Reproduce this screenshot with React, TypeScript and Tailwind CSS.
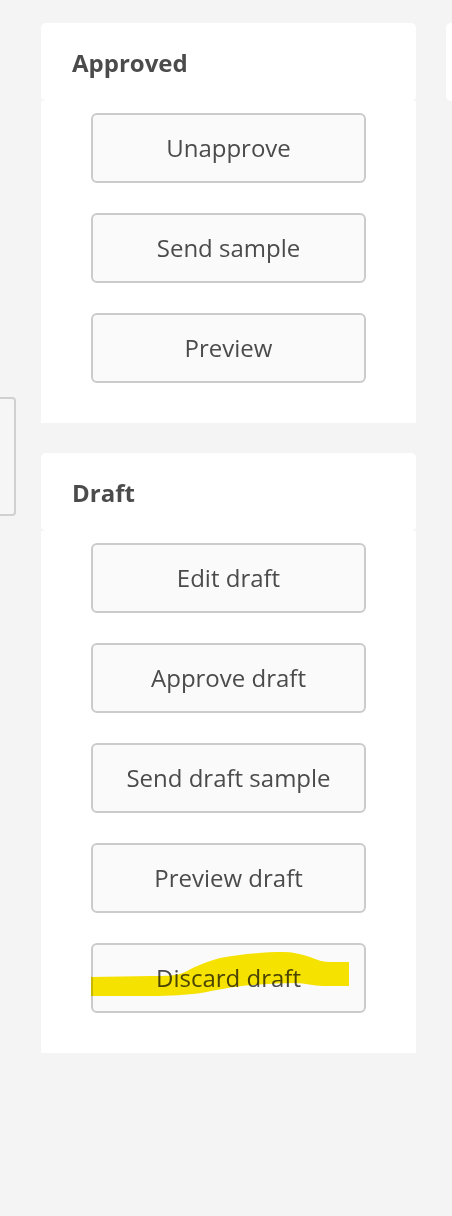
import React from "react";

type Section = {
  title: string;
  actions: string[];
};

const sections: Section[] = [
  { title: "Approved", actions: ["Unapprove", "Send sample", "Preview"] },
  {
    title: "Draft",
    actions: [
      "Edit draft",
      "Approve draft",
      "Send draft sample",
      "Preview draft",
      "Discard draft",
    ],
  },
];

const font = { fontFamily: '"Open Sans", "Noto Sans", sans-serif' };

// yellow marker stroke someone drew over the discard button
const Highlight: React.FC = () => (
  <svg
    className="pointer-events-none absolute left-0 top-0 mix-blend-multiply"
    width="275"
    height="70"
    viewBox="0 0 275 70"
  >
    <path
      d="M0 34 L60 33 C75 33 84 33 92 30 C100 26 110 20 129 15 C150 11 175 9 192 9 C202 9 210 11 219 14 C226 17 232 19 240 19 L258 19 L258 43 L232 43 C222 43 214 40 205 40 C190 40 175 41 160 42 C140 44 125 47 110 50 C95 52 80 53 60 53 L0 53 Z"
      fill="#fbe700"
    />
  </svg>
);

const ActionButton: React.FC<{ label: string; marked?: boolean }> = ({
  label,
  marked,
}) => (
  <div className="relative h-[70px] w-[275px]">
    <button
      className="flex h-full w-full items-center justify-center rounded-[6px] border-2 border-[#cbcbcb] bg-[#fafafa] text-[24px] text-[#4b4b4b]"
      style={font}
    >
      {label}
    </button>
    {marked && <Highlight />}
  </div>
);

const Card: React.FC<{ section: Section }> = ({ section }) => (
  <div className="flex flex-col">
    <div className="flex h-[78px] items-center rounded-[5px] bg-white pl-[31px] pt-[2px]">
      <h2 className="text-[24px] font-bold text-[#4b4b4b]" style={font}>
        {section.title}
      </h2>
    </div>
    <div className="flex flex-col gap-[30px] bg-white pb-[40px] pl-[50px] pt-[12px]">
      {section.actions.map((a) => (
        <ActionButton key={a} label={a} marked={a === "Discard draft"} />
      ))}
    </div>
  </div>
);

const App: React.FC = () => {
  return (
    <div className="flex min-h-screen w-full overflow-hidden bg-[#f4f4f4]">
      {/* cut-off panel on the left */}
      <div className="w-[16px] shrink-0 pt-[397px]">
        <div className="h-[119px] w-[16px] rounded-r-[4px] border-2 border-l-0 border-[#d0d0d0] bg-[#f6f6f6]" />
      </div>

      <div className="ml-[25px] flex w-[375px] shrink-0 flex-col gap-[30px] pt-[23px]">
        {sections.map((s) => (
          <Card key={s.title} section={s} />
        ))}
      </div>

      {/* next column, mostly off screen */}
      <div className="ml-[30px] w-[200px] shrink-0 pt-[23px]">
        <div className="h-[78px] rounded-[5px] bg-white" />
      </div>
    </div>
  );
};

export default App;
